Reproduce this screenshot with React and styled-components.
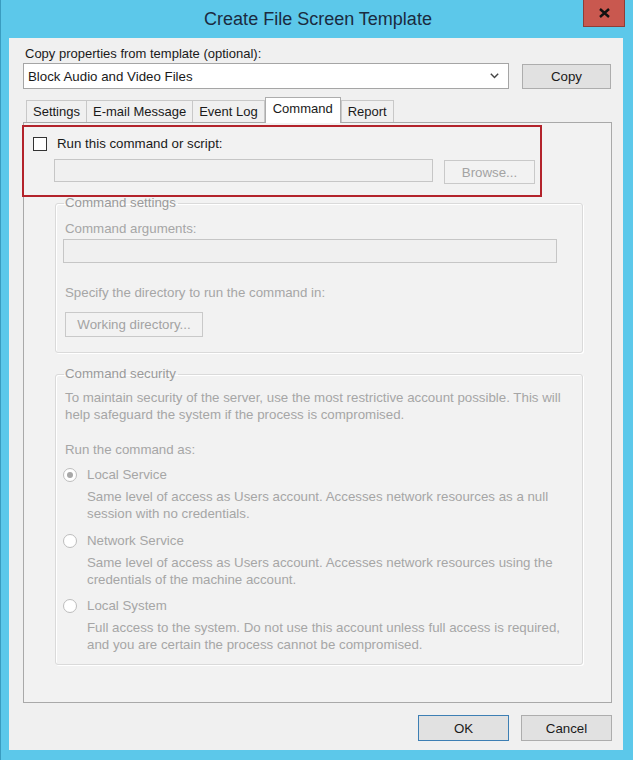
import React from "react";
import styled, { createGlobalStyle, css } from "styled-components";

const Global = createGlobalStyle`
  html, body { margin: 0; padding: 0; background: #5cc8ea; }
  body { font-family: "Liberation Sans", Arial, sans-serif; font-size: 13.3px; color: #1a1a1a; }
`;

const Frame = styled.div`
  width: 633px;
  height: 760px;
  box-sizing: border-box;
  background: #5cc8ea;
  border-left: 1px solid #3a9cc0;
  display: flex;
  flex-direction: column;
  overflow: hidden;
`;

const TitleBar = styled.div`
  height: 38px;
  display: flex;
  align-items: flex-start;
  position: relative;
`;

const Title = styled.div`
  flex: 1;
  text-align: center;
  font-size: 18px;
  line-height: 38px;
  color: #1b2b40;
  padding-left: 2px;
`;

const CloseBtn = styled.div`
  position: absolute;
  left: 582px;
  top: 0;
  width: 42px;
  height: 27px;
  box-sizing: border-box;
  background: #c9584f;
  border: 1px solid #8e3d37;
  border-top: none;
  display: flex;
  align-items: center;
  justify-content: center;
`;

const Client = styled.div`
  margin-left: 8px;
  width: 614px;
  height: 712px;
  background: #f0f0f0;
  display: flex;
  flex-direction: column;
`;

const Label = styled.div`
  margin: 8px 0 0 16px;
  line-height: 16px;
  font-size: 13px;
`;

const ComboRow = styled.div`
  display: flex;
  align-items: flex-start;
  margin: 1px 0 0 14px;
`;

const Combo = styled.div`
  width: 486px;
  height: 26px;
  box-sizing: border-box;
  background: #fff;
  border: 1px solid #a5a5a5;
  display: flex;
  align-items: center;
  justify-content: space-between;
  padding: 0 9px 0 4px;
`;

const Button = styled.div`
  box-sizing: border-box;
  width: ${(p) => p.$w || 91}px;
  height: ${(p) => p.$h || 26}px;
  background: ${(p) => (p.$disabled ? "#f2f2f2" : "#e1e1e1")};
  border: 1px solid ${(p) => (p.$primary ? "#3d7fb4" : p.$disabled ? "#c9c9c9" : "#adadad")};
  color: ${(p) => (p.$disabled ? "#a3a3a3" : "#1a1a1a")};
  display: flex;
  align-items: center;
  justify-content: center;
  margin-left: ${(p) => p.$ml || 0}px;
  margin-top: ${(p) => p.$mt || 0}px;
`;

const TabStrip = styled.div`
  display: flex;
  align-items: flex-end;
  height: 25px;
  margin: 8px 0 0 17px;
  position: relative;
  z-index: 1;
`;

const Tab = styled.div`
  box-sizing: border-box;
  height: 22px;
  padding: 0 6px;
  border: 1px solid #c8c8c8;
  border-bottom: none;
  background: #f0f0f0;
  line-height: 21px;
  margin-right: -1px;
  font-size: 13px;
  ${(p) =>
    p.$active &&
    css`
      height: 26px;
      background: #fff;
      border-color: #adadad;
      line-height: 22px;
      padding: 0 7px;
      margin: 0 0 -1px 1px;
    `}
`;

const Panel = styled.div`
  margin-left: 14px;
  width: 589px;
  height: 581px;
  box-sizing: border-box;
  border: 1px solid #a9a9a9;
  background: #f2f2f2;
  display: flex;
  flex-direction: column;
  align-items: flex-start;
`;

const Highlight = styled.div`
  margin: 2px 0 0 -2px;
  width: 520px;
  height: 72px;
  box-sizing: border-box;
  border: 2px solid #b3232b;
  display: flex;
  flex-direction: column;
`;

const CheckRow = styled.label`
  display: flex;
  align-items: center;
  margin: 8px 0 0 9px;
  line-height: 17px;
  gap: 10px;
`;

const CheckBox = styled.span`
  width: 14px;
  height: 14px;
  box-sizing: border-box;
  border: 1px solid #333;
  background: #fff;
`;

const FieldRow = styled.div`
  display: flex;
  align-items: flex-start;
  margin: 7px 0 0 30px;
`;

const TextBox = styled.div`
  box-sizing: border-box;
  width: ${(p) => p.$w}px;
  height: ${(p) => p.$h || 24}px;
  border: 1px solid #c6c6c6;
  background: #f0f0f0;
  margin-top: ${(p) => p.$mt || 0}px;
`;

const Group = styled.fieldset`
  margin: ${(p) => p.$mt}px 0 0 31px;
  width: 528px;
  box-sizing: border-box;
  border: 1px solid #dadada;
  border-radius: 3px;
  box-shadow: inset 1px 1px 0 #fff, 1px 1px 0 #fff;
  padding: 0 0 ${(p) => p.$pb}px 7px;
  color: #a6a6a6;
  display: flex;
  flex-direction: column;
  align-items: flex-start;
`;

const Legend = styled.legend`
  padding: 0 2px 0 1px;
  margin-left: 1px;
  line-height: 12px;
  color: #9a9a9a;
`;

const Dim = styled.div`
  line-height: ${(p) => p.$lh || 17}px;
  margin: ${(p) => p.$mt || 0}px 0 0 ${(p) => p.$ml || 2}px;
  white-space: nowrap;
`;

const RadioRow = styled.div`
  display: flex;
  align-items: center;
  gap: 10px;
  line-height: 17px;
  margin: ${(p) => p.$mt}px 0 0 0;
`;

const Radio = styled.span`
  width: 14px;
  height: 14px;
  box-sizing: border-box;
  border-radius: 50%;
  border: 1px solid #bdbdbd;
  background: #fff;
  display: flex;
  align-items: center;
  justify-content: center;
  &::after {
    content: "";
    width: 6px;
    height: 6px;
    border-radius: 50%;
    background: ${(p) => (p.$on ? "#a8a8a8" : "transparent")};
  }
`;

const Desc = styled.div`
  margin: 6px 0 0 24px;
  line-height: 16.5px;
  white-space: nowrap;
`;

const Footer = styled.div`
  display: flex;
  justify-content: flex-end;
  gap: 12px;
  margin: 12px 11px 0 0;
`;

const Chevron = () => (
  <svg width="9" height="6" viewBox="0 0 9 6">
    <path d="M0.8 0.8 L4.5 4.6 L8.2 0.8" fill="none" stroke="#444" strokeWidth="1.4" />
  </svg>
);

const XIcon = () => (
  <svg width="11" height="10" viewBox="0 0 11 10">
    <path d="M1 1 L10 9 M10 1 L1 9" stroke="#111" strokeWidth="2.4" />
  </svg>
);

export default function App() {
  return (
    <>
      <Global />
      <Frame>
        <TitleBar>
          <Title>Create File Screen Template</Title>
          <CloseBtn>
            <XIcon />
          </CloseBtn>
        </TitleBar>
        <Client>
          <Label>Copy properties from template (optional):</Label>
          <ComboRow>
            <Combo>
              <span>Block Audio and Video Files</span>
              <Chevron />
            </Combo>
            <Button $w={89} $h={25} $ml={13} $mt={1}>Copy</Button>
          </ComboRow>
          <TabStrip>
            <Tab>Settings</Tab>
            <Tab>E-mail Message</Tab>
            <Tab>Event Log</Tab>
            <Tab $active>Command</Tab>
            <Tab>Report</Tab>
          </TabStrip>
          <Panel>
            <Highlight>
              <CheckRow>
                <CheckBox />
                <span>Run this command or script:</span>
              </CheckRow>
              <FieldRow>
                <TextBox $w={379} $h={23} />
                <Button $disabled $w={91} $h={24} $ml={11} $mt={1}>Browse...</Button>
              </FieldRow>
            </Highlight>
            <Group $mt={0} $pb={15}>
              <Legend>Command settings</Legend>
              <Dim $mt={11}>Command arguments:</Dim>
              <TextBox $w={494} $h={24} $mt={2} />
              <Dim $mt={21}>Specify the directory to run the command in:</Dim>
              <Button $disabled $w={138} $h={25} $ml={2} $mt={11}>Working directory...</Button>
            </Group>
            <Group $mt={15} $pb={11}>
              <Legend>Command security</Legend>
              <Dim $mt={9}>
                To maintain security of the server, use the most restrictive account possible. This will
                <br />
                help safeguard the system if the process is compromised.
              </Dim>
              <Dim $mt={18}>Run the command as:</Dim>
              <RadioRow $mt={8}>
                <Radio $on />
                <span>Local Service</span>
              </RadioRow>
              <Desc>
                Same level of access as Users account. Accesses network resources as a null
                <br />
                session with no credentials.
              </Desc>
              <RadioRow $mt={10}>
                <Radio />
                <span>Network Service</span>
              </RadioRow>
              <Desc>
                Same level of access as Users account. Accesses network resources using the
                <br />
                credentials of the machine account.
              </Desc>
              <RadioRow $mt={9}>
                <Radio />
                <span>Local System</span>
              </RadioRow>
              <Desc>
                Full access to the system. Do not use this account unless full access is required,
                <br />
                and you are certain the process cannot be compromised.
              </Desc>
            </Group>
          </Panel>
          <Footer>
            <Button $primary>OK</Button>
            <Button>Cancel</Button>
          </Footer>
        </Client>
      </Frame>
    </>
  );
}
